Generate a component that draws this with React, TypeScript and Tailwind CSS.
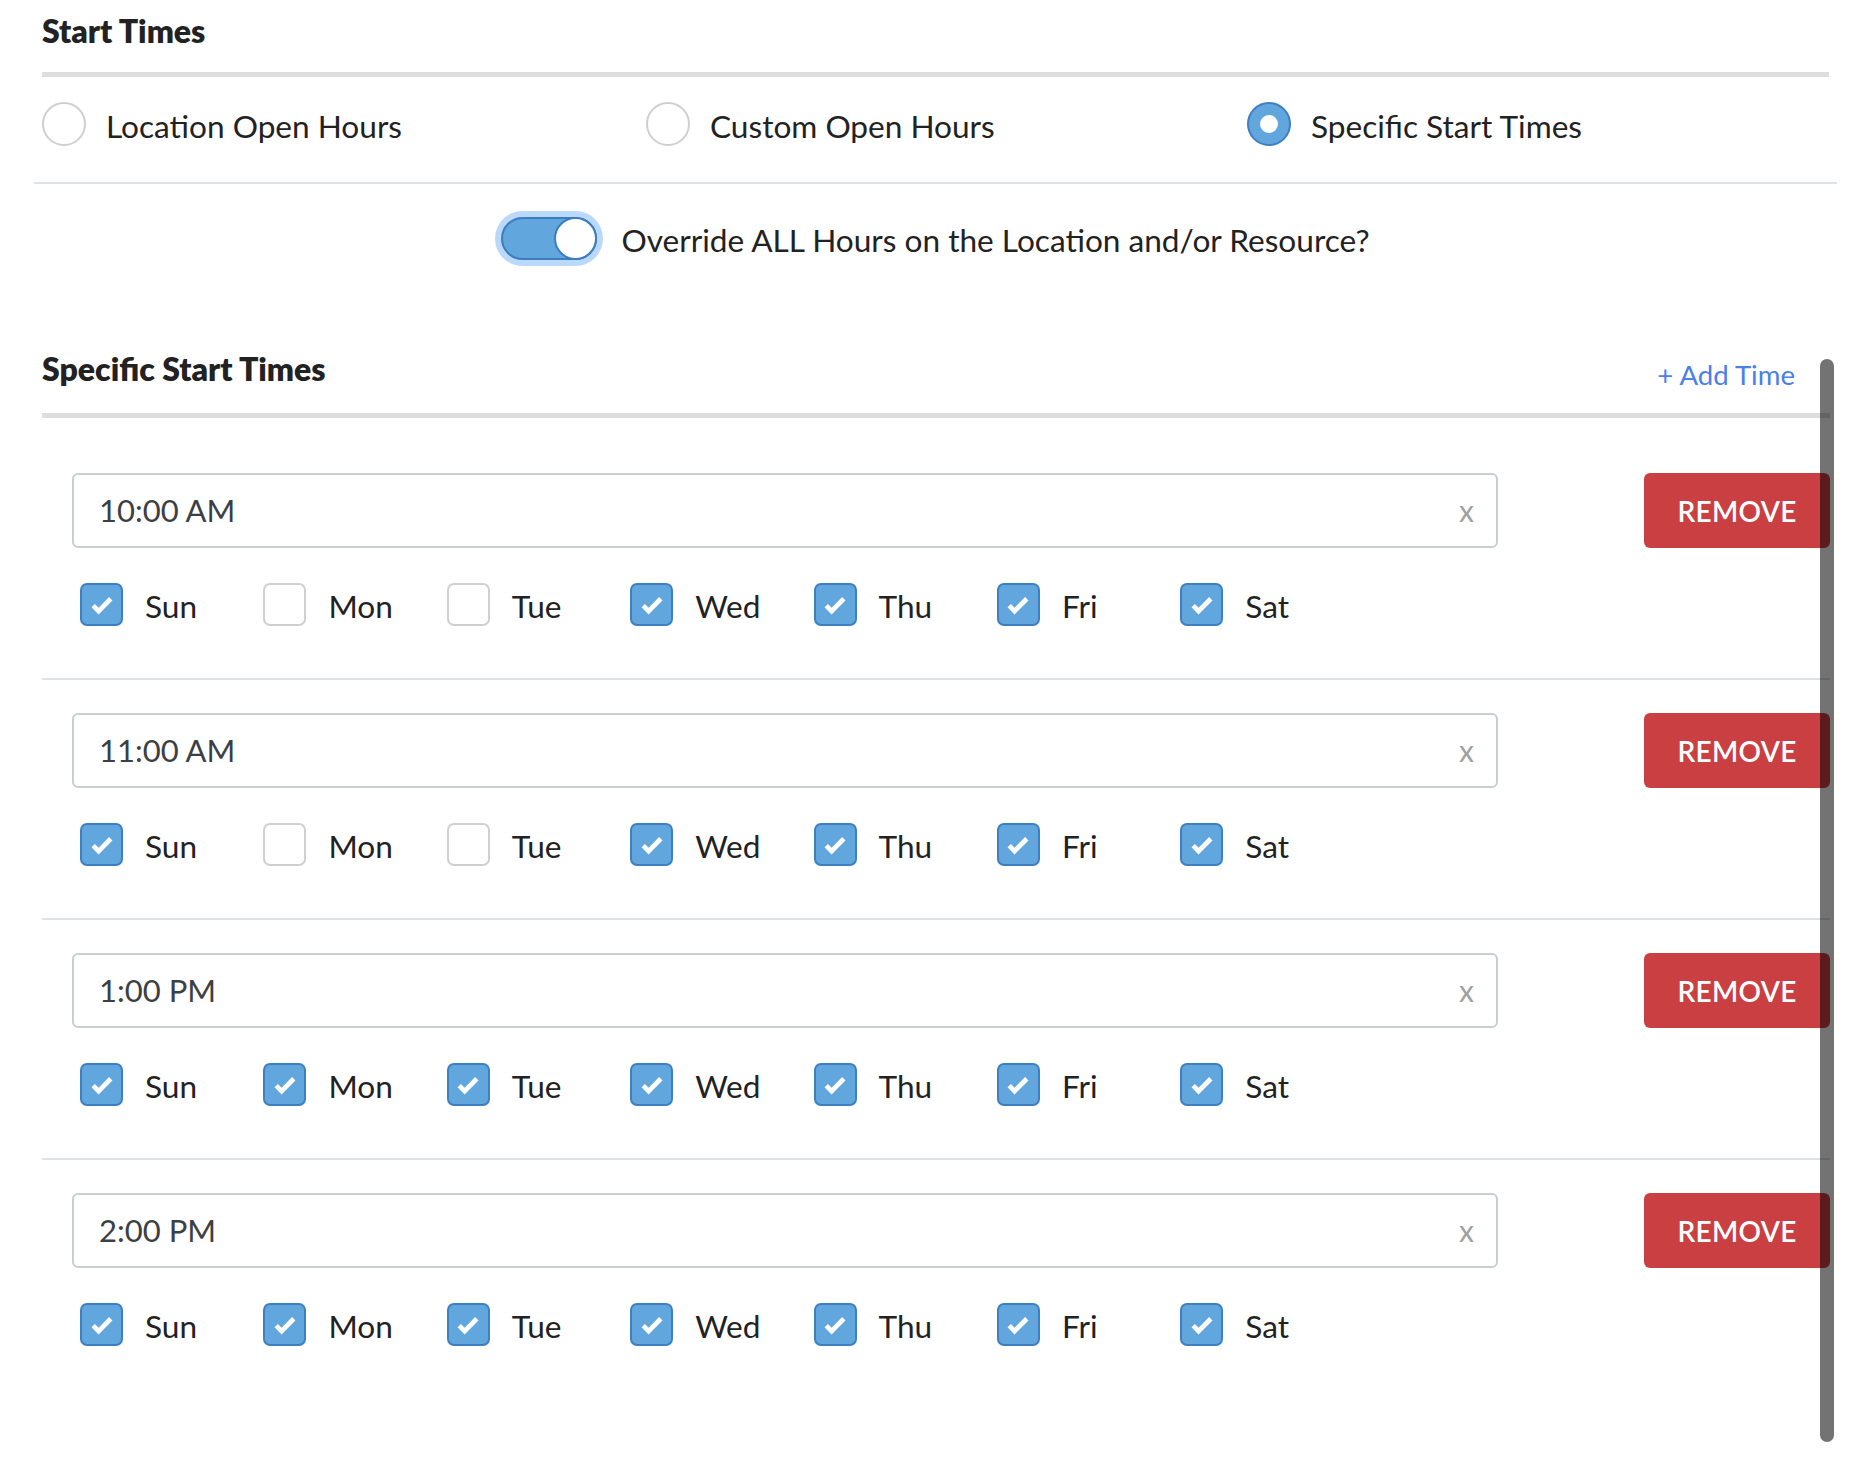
import { useState } from 'react'

const DAYS = ['Sun', 'Mon', 'Tue', 'Wed', 'Thu', 'Fri', 'Sat']

const initialRows = [
  { id: 1, time: '10:00 AM', days: [true, false, false, true, true, true, true] },
  { id: 2, time: '11:00 AM', days: [true, false, false, true, true, true, true] },
  { id: 3, time: '1:00 PM', days: [true, true, true, true, true, true, true] },
  { id: 4, time: '2:00 PM', days: [true, true, true, true, true, true, true] },
]

function Check() {
  return (
    <svg width="34" height="34" viewBox="0 0 24 24" fill="none">
      <path d="M5.8 12.4l3.8 3.9L18.2 7.6" stroke="#fff" strokeWidth="3.3" strokeLinejoin="miter" />
    </svg>
  )
}

function Radio({ checked, label, onClick }: { checked: boolean; label: string; onClick: () => void }) {
  return (
    <button type="button" onClick={onClick} className="flex items-center gap-[20px] text-left">
      {checked ? (
        <span className="flex h-[44px] w-[44px] items-center justify-center rounded-full border-2 border-[#3d7fc1] bg-[#62a6de]">
          <span className="h-[18px] w-[18px] rounded-full bg-white" />
        </span>
      ) : (
        <span className="h-[44px] w-[44px] rounded-full border-2 border-[#cfcfcf] bg-white" />
      )}
      <span className="relative top-[2px] text-[31.6px] leading-[40px] text-[#222]">{label}</span>
    </button>
  )
}

export default function App() {
  const [mode, setMode] = useState(2)
  const [override, setOverride] = useState(true)
  const [rows, setRows] = useState(initialRows)

  const toggleDay = (rowId: number, i: number) => {
    setRows(prev => prev.map(r => (r.id === rowId ? { ...r, days: r.days.map((d, j) => (j === i ? !d : d)) } : r)))
  }

  return (
    <div className="h-[1458px] w-[1854px] overflow-hidden bg-white pl-[34px] pr-[17px] font-['Lato','Noto_Sans',sans-serif] text-[#222]">
      {/* Start Times */}
      <div className="px-[8px] pt-[11px]">
        <h2 className="text-[32px] font-extrabold leading-[40px]">Start Times</h2>
        <div className="mt-[21px] h-[5px] bg-[#dddddd]" />
      </div>

      <div className="mt-[25px] flex h-[44px] pl-[8px]">
        {['Location Open Hours', 'Custom Open Hours', 'Specific Start Times'].map((label, i) => (
          <div key={label} className={i === 0 ? 'w-[604px] shrink-0' : i === 1 ? 'w-[601px] shrink-0' : 'flex-1'}>
            <Radio checked={mode === i} label={label} onClick={() => setMode(i)} />
          </div>
        ))}
      </div>

      <div className="mt-[36px] h-[2px] bg-[#dfe2e5]" />

      <div className="mt-[25px] flex h-[58px] items-center justify-center gap-[24px]">
        <button
          type="button"
          onClick={() => setOverride(!override)}
          className={`relative h-[43px] w-[96px] rounded-full border-2 ring-[6px] ${override ? 'border-[#3b7dbf] bg-[#62a6de] ring-[#b9d8fa]' : 'border-[#cfcfcf] bg-white ring-transparent'}`}
        >
          <span
            className={`absolute top-[-2px] h-[43px] w-[43px] rounded-full border-2 bg-white ${override ? 'right-[-2px] border-[#3b7dbf]' : 'left-[-2px] border-[#cfcfcf]'}`}
          />
        </button>
        <span className="relative top-[2px] text-[31.6px] leading-[40px] text-[#222]">Override ALL Hours on the Location and/or Resource?</span>
      </div>

      {/* Specific Start Times */}
      <div className="relative mt-[82px] h-[1095px] px-[8px]">
        <div className="flex items-baseline justify-between pr-[34px]">
          <h2 className="text-[32px] font-extrabold leading-[40px]">Specific Start Times</h2>
          <button type="button" className="relative top-[4px] text-[27.6px] leading-[40px] text-[#4b80e6]">+ Add Time</button>
        </div>
        <div className="mt-[22px] mr-[-1px] h-[5px] bg-[#dddddd]" />

        {rows.map((row, idx) => (
          <div
            key={row.id}
            className={`${idx === 0 ? 'pt-[55px]' : 'pt-[33px]'} ${idx < rows.length - 1 ? 'border-b-2 border-[#dfe2e5] pb-[52px]' : ''} mr-[-1px]`}
          >
            <div className="flex h-[75px] items-stretch pl-[30px]">
              <div className="flex w-[1426px] items-center justify-between rounded-[6px] border-2 border-[#c9ced3] pl-[25px] pr-[22px]">
                <span className="text-[31px] text-[#3c3f43]">{row.time}</span>
                <span className="text-[30px] text-[#a0a0a0]">x</span>
              </div>
              <button
                type="button"
                onClick={() => setRows(prev => prev.filter(r => r.id !== row.id))}
                className="ml-auto w-[186px] rounded-[6px] bg-[#c93f42] text-[28px] font-semibold tracking-[0.3px] text-white"
              >
                REMOVE
              </button>
            </div>
            <div className="mt-[35px] flex h-[43px] pl-[38px]">
              {DAYS.map((d, i) => (
                <label key={d} className="flex w-[183.4px] cursor-pointer items-center gap-[22px]" onClick={() => toggleDay(row.id, i)}>
                  {row.days[i] ? (
                    <span className="flex h-[43px] w-[43px] items-center justify-center rounded-[7px] border-2 border-[#3d7fc1] bg-[#62a6de]">
                      <Check />
                    </span>
                  ) : (
                    <span className="h-[43px] w-[43px] rounded-[7px] border-2 border-[#cfcfcf] bg-white" />
                  )}
                  <span className="relative top-[2px] text-[31.6px] text-[#222]">{d}</span>
                </label>
              ))}
            </div>
          </div>
        ))}

        {/* overlay scrollbar */}
        <div className="absolute top-[10px] bottom-[2px] right-[3px] w-[14px] rounded-full bg-[rgba(0,0,0,0.55)]" />
      </div>
    </div>
  )
}
